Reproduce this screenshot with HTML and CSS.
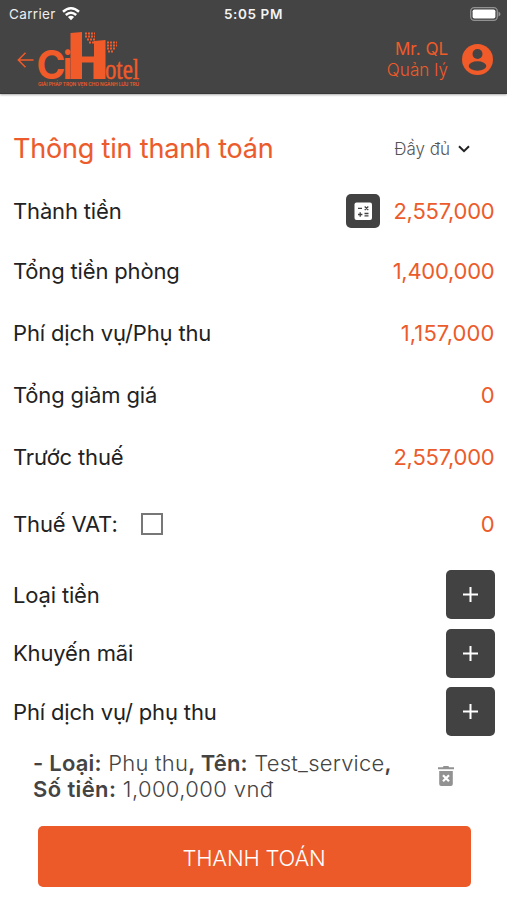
FILE: index.html
```html
<!DOCTYPE html>
<html lang="vi">
<head>
<meta charset="utf-8">
<title>Thông tin thanh toán</title>
<link rel="stylesheet" href="styles.css">
</head>
<body>
<header class="header">
  <div class="status">
    <div class="carrier"><span>Carrier</span>
      <svg width="18" height="14" viewBox="0 0 18 14" fill="none" stroke="#fff" stroke-width="2.5"><path d="M1 4.8Q9-2.2 17 4.8M3.8 8Q9 3.5 14.2 8"/><path d="M5.9 10.1Q9 7.6 12.1 10.1L9 13.3Z" fill="#fff" stroke="none"/></svg>
    </div>
    <div class="clock">5:05 PM</div>
    <svg class="battery" width="31" height="14" viewBox="0 0 31 14"><rect x=".7" y=".7" width="26.6" height="12.6" rx="3.5" fill="none" stroke="#929292" stroke-width="1.3"/><rect x="2.6" y="2.4" width="22.8" height="9.2" rx="1.8" fill="#fff"/><path d="M28.5 4.5Q30.5 5.5 30.5 7T28.5 9.5Z" fill="#929292"/></svg>
  </div>
  <div class="bar">
    <svg class="back" width="17" height="16" viewBox="0 0 17 16" fill="none" stroke="#f15a29" stroke-width="1.5"><path d="M16.5 8H1.5M8.5 .8L1.3 8l7.2 7.2"/></svg>
    <svg class="logo" width="104" height="60" viewBox="0 0 104 60" fill="#f15a29">
      <text class="logo-c" x="-1.500" y="48.500" textLength="29" lengthAdjust="spacingAndGlyphs">C</text>
      <text class="logo-i" x="25" y="48.500" textLength="9" lengthAdjust="spacingAndGlyphs">i</text>
      <path d="M32.500 3l11.500-1v24.500h12V11l11.500-1v39H55.500V32.500H44v16.500H32.500z"/>
      <g class="windows"><path d="M47 3.500h10M47 6.500h10M49 9.500h8M51 12.500h5M69 12.500h10M69 15.500h10M69 18.500h8M70 21.500h5"/></g>
      <text class="logo-otel" x="67" y="48.500" textLength="34" lengthAdjust="spacingAndGlyphs">otel</text>
      <text class="tagline" x="0" y="56" textLength="101" lengthAdjust="spacingAndGlyphs">GIẢI PHÁP TRỌN VẸN CHO NGÀNH LƯU TRÚ</text>
    </svg>
    <div class="user"><b>Mr. QL</b><span>Quản lý</span></div>
    <svg class="avatar" width="31" height="31" viewBox="0 0 31 31"><circle cx="15.500" cy="15.500" r="15.500" fill="#f15a29"/><circle cx="15.500" cy="10" r="5" fill="#444"/><ellipse cx="15.500" cy="22" rx="8.800" ry="4.700" fill="#444"/></svg>
  </div>
</header>
<main>
  <div class="row title"><h1>Thông tin thanh toán</h1>
    <div class="filter"><span>Đầy đủ</span><svg width="12" height="8" viewBox="0 0 12 8" fill="none" stroke="#222" stroke-width="2"><path d="M1 1.200l5 5 5-5"/></svg></div>
  </div>
  <div class="row first"><span>Thành tiền</span>
    <div class="total"><svg width="34" height="34" viewBox="0 0 34 34"><rect width="34" height="34" rx="5" fill="#424242"/><rect x="8.500" y="8.500" width="17.500" height="17.500" rx="2" fill="#fff"/><path d="M12 14.300h4M18.700 12.500l3.600 3.600M22.300 12.500l-3.600 3.600M12 20.500h4.400M14.200 18.300v4.400M18.500 19.500h4M18.500 21.800h4" stroke="#424242" stroke-width="1.300"/></svg><span class="amount">2,557,000</span></div>
  </div>
  <div class="row room"><span>Tổng tiền phòng</span><span class="amount">1,400,000</span></div>
  <div class="row"><span>Phí dịch vụ/Phụ thu</span><span class="amount fee">1,157,000</span></div>
  <div class="row"><span>Tổng giảm giá</span><span class="amount">0</span></div>
  <div class="row"><span>Trước thuế</span><span class="amount">2,557,000</span></div>
  <div class="row vat"><div class="vat-label"><span>Thuế VAT:</span><i class="check"></i></div><span class="amount">0</span></div>
  <section class="extras">
    <div class="extra"><span>Loại tiền</span><button class="add"><svg width="15" height="15" viewBox="0 0 15 15" stroke="#fff" stroke-width="2"><path d="M0 7.500h15M7.500 0v15"/></svg></button></div>
    <div class="extra"><span>Khuyến mãi</span><button class="add"><svg width="15" height="15" viewBox="0 0 15 15" stroke="#fff" stroke-width="2"><path d="M0 7.500h15M7.500 0v15"/></svg></button></div>
    <div class="extra"><span>Phí dịch vụ/ phụ thu</span><button class="add"><svg width="15" height="15" viewBox="0 0 15 15" stroke="#fff" stroke-width="2"><path d="M0 7.500h15M7.500 0v15"/></svg></button></div>
  </section>
  <div class="detail">
    <p><b>- Loại:</b> Phụ thu<b>, Tên:</b> Test_service<b>,</b><br><span class="sum"><b>Số tiền:</b> 1,000,000 vnđ</span></p>
    <svg width="16" height="20" viewBox="0 0 16 20"><path d="M0 1.200h4.800L5.600 0h4.800l.8 1.200H16v2H0zM1.200 5h13.600v13a2 2 0 0 1-2 2H3.200a2 2 0 0 1-2-2z" fill="#929292"/><path d="M5 9.300l6 6M11 9.300l-6 6" stroke="#fff" stroke-width="2.200"/></svg>
  </div>
  <button class="pay">THANH TOÁN</button>
</main>
</body>
</html>
```
FILE: styles.css
```css
* { box-sizing: border-box; }
body { margin: 0; width: 507px; height: 900px; overflow: hidden; background: #fff; color: #222; font-family: Inter, "Liberation Sans", sans-serif; }
svg { display: block; flex: none; }
button { border: 0; padding: 0; font-family: inherit; }
.header { height: 94px; background: #444; border-bottom: 1px solid #383838; box-shadow: 0 1px 2px #0005; }
.status { height: 28px; padding: 0 6px 0 9px; display: grid; grid-template-columns: 1fr auto 1fr; align-items: center; color: #fff; font-size: 13.5px; }
.carrier { display: flex; align-items: center; gap: 6px; color: #eee; letter-spacing: .35px; }
.clock { margin-left: -3px; font-weight: 600; letter-spacing: .6px; color: #f3f3f3; }
.battery { justify-self: end; }
.bar { height: 65px; display: flex; padding: 2px 14px 0 17px; color: #f15a29; }
.back { margin-top: 22px; }
.logo { margin-left: 4px; overflow: visible; }
.logo text { font-family: Inter, sans-serif; font-weight: 700; }
.logo .logo-c { font-size: 39px; font-weight: 700; }
.logo .logo-i { font-size: 38px; }
.logo .logo-otel { font-family: "Liberation Serif", serif; font-weight: 400; font-size: 29px; stroke: #f15a29; stroke-width: .5; }
.logo .tagline { font-size: 4.8px; font-weight: 600; }
.windows { fill: none; stroke: #f15a29; stroke-width: 2; stroke-dasharray: 2 1; }
.user { margin-left: auto; display: flex; flex-direction: column; align-items: flex-end; font-size: 17px; line-height: 21px; padding-top: 9px; }
.user b { font-weight: 400; }
.user span { font-weight: 300; letter-spacing: .1px; }
.avatar { margin: 14px 0 0 14px; }
.row { height: 62px; padding: 0 13px; display: flex; align-items: center; justify-content: space-between; font-size: 22px; letter-spacing: -.16px; white-space: nowrap; }
.title { height: 87px; padding-top: 22px; }
h1 { margin: 0; font-size: 27px; line-height: 32px; font-weight: 400; letter-spacing: -.18px; color: #ec5b2b; -webkit-text-stroke: .1px #ec5b2b; }
.filter { display: flex; align-items: center; gap: 8px; margin-right: 24px; color: #555; font-size: 17px; font-weight: 300; letter-spacing: 0; }
.first { height: 60px; }
.room { height: 60px; margin-bottom: 1px; }
.total { display: flex; align-items: center; gap: 13px; }
.amount { color: #ec5b2b; letter-spacing: -.25px; margin-right: -.5px; }
.fee { letter-spacing: .1px; }
.vat { height: 72px; }
.vat-label { display: flex; align-items: center; gap: 23px; }
.check { width: 22px; height: 22px; border: 2px solid #777; }
.extras { padding: 10px 12px 0 13px; display: grid; gap: 9.5px; }
.extra { display: flex; justify-content: space-between; align-items: center; font-size: 22px; letter-spacing: -.16px; }
.add { width: 49px; height: 49px; border-radius: 5px; background: #424242; display: grid; place-items: center; }
.detail { margin: 14px 53px 0 33px; height: 52px; display: flex; justify-content: space-between; align-items: center; }
.detail p { margin: 0; font-size: 22px; line-height: 26px; font-weight: 300; letter-spacing: .22px; color: #444; white-space: nowrap; }
.detail .sum { letter-spacing: .38px; }
.detail b { font-weight: 600; }
.pay { display: block; width: 433px; height: 61px; margin: 24px 0 0 37.5px; border-radius: 5px; background: #ed5a29; color: #fff; font-size: 22px; font-weight: 300; letter-spacing: -.2px; padding-top: 2px; }
```
